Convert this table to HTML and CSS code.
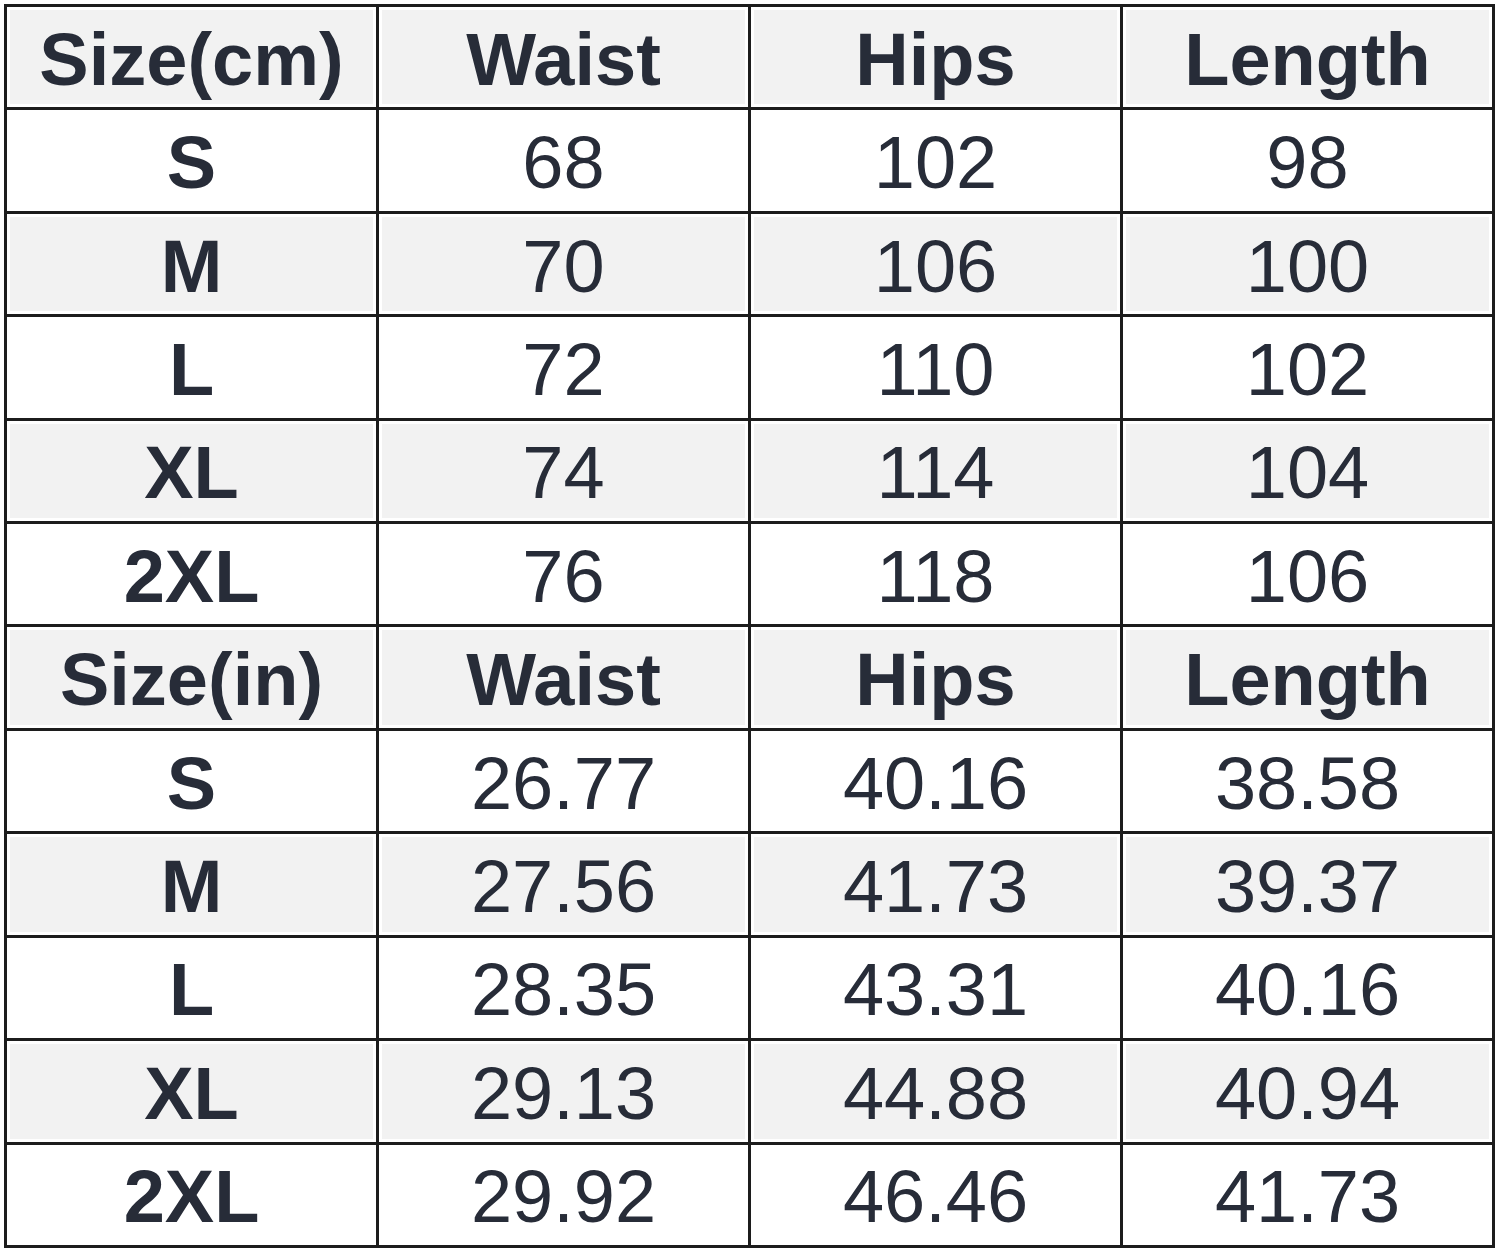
FILE: index.html
```html
<!DOCTYPE html>
<html>
<head>
<meta charset="utf-8">
<link rel="stylesheet" href="styles.css">
</head>
<body>
<div class="chart">
  <div class="c g h">Size(cm)</div><div class="c g h">Waist</div><div class="c g h">Hips</div><div class="c g h">Length</div>
  <div class="c b">S</div><div class="c">68</div><div class="c">102</div><div class="c">98</div>
  <div class="c g b">M</div><div class="c g">70</div><div class="c g">106</div><div class="c g">100</div>
  <div class="c b">L</div><div class="c">72</div><div class="c">110</div><div class="c">102</div>
  <div class="c g b">XL</div><div class="c g">74</div><div class="c g">114</div><div class="c g">104</div>
  <div class="c b">2XL</div><div class="c">76</div><div class="c">118</div><div class="c">106</div>
  <div class="c g h">Size(in)</div><div class="c g h">Waist</div><div class="c g h">Hips</div><div class="c g h">Length</div>
  <div class="c b">S</div><div class="c">26.77</div><div class="c">40.16</div><div class="c">38.58</div>
  <div class="c g b">M</div><div class="c g">27.56</div><div class="c g">41.73</div><div class="c g">39.37</div>
  <div class="c b">L</div><div class="c">28.35</div><div class="c">43.31</div><div class="c">40.16</div>
  <div class="c g b">XL</div><div class="c g">29.13</div><div class="c g">44.88</div><div class="c g">40.94</div>
  <div class="c b">2XL</div><div class="c">29.92</div><div class="c">46.46</div><div class="c">41.73</div>
</div>
</body>
</html>
```
FILE: styles.css
```css
html, body {
  margin: 0;
  padding: 0;
  background: #ffffff;
}
body {
  padding: 4px 0 0 4px;
}
.chart {
  box-sizing: border-box;
  width: 1491px;
  height: 1244px;
  display: grid;
  grid-template-columns: repeat(4, 1fr);
  grid-template-rows: repeat(12, 1fr);
  gap: 3px;
  padding: 3px;
  background: #1c1c1c;
  font-family: "Liberation Sans", Arial, sans-serif;
  font-size: 74px;
  color: #272c38;
}
.c {
  background: #ffffff;
  display: flex;
  align-items: center;
  justify-content: center;
  padding-top: 4px;
  box-sizing: border-box;
  white-space: nowrap;
}
.g {
  background: #f2f2f2;
  box-shadow: inset 0 0 0 3px #ffffff;
}
.h, .b {
  font-weight: bold;
}
```
